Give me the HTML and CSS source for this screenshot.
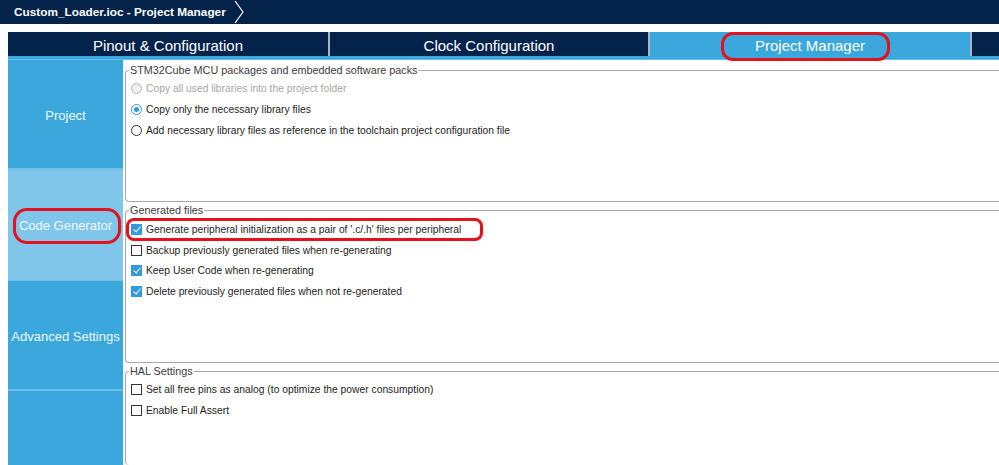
FILE: index.html
```html
<!doctype html>
<html>

<head>
    <meta charset="UTF-8">
    <title>Custom_Loader.ioc - Project Manager</title>
    <link rel="stylesheet" href="styles.css">
</head>

<body>
    <header class="topbar">
        <span class="crumb">Custom_Loader.ioc - Project Manager</span>
        <svg class="chevron" width="12" height="24" viewBox="0 0 12 24">
            <polyline points="2,1 10,12 2,23" fill="none" stroke="#ffffff" stroke-width="1.2"/>
        </svg>
    </header>

    <nav class="tabs">
        <div class="tab">Pinout &amp; Configuration</div>
        <div class="tab">Clock Configuration</div>
        <div class="tab active">Project Manager</div>
        <div class="tab rest"></div>
    </nav>
    <div class="tabline"></div>

    <div class="workspace">
        <aside class="sidebar">
            <div class="side-item">Project</div>
            <div class="side-item selected">Code Generator</div>
            <div class="side-item">Advanced Settings</div>
            <div class="side-fill"></div>
        </aside>

        <main class="panel">
            <fieldset class="group g-packs">
                <legend>STM32Cube MCU packages and embedded software packs</legend>
                <div class="row disabled"><span class="radio"></span>Copy all used libraries into the project folder</div>
                <div class="row"><span class="radio on"></span>Copy only the necessary library files</div>
                <div class="row"><span class="radio"></span>Add necessary library files as reference in the toolchain project configuration file</div>
            </fieldset>

            <fieldset class="group g-files">
                <legend>Generated files</legend>
                <div class="row"><span class="check on"></span>Generate peripheral initialization as a pair of '.c/.h' files per peripheral</div>
                <div class="row"><span class="check"></span>Backup previously generated files when re-generating</div>
                <div class="row"><span class="check on"></span>Keep User Code when re-generating</div>
                <div class="row"><span class="check on"></span>Delete previously generated files when not re-generated</div>
            </fieldset>

            <fieldset class="group g-hal">
                <legend>HAL Settings</legend>
                <div class="row"><span class="check"></span>Set all free pins as analog (to optimize the power consumption)</div>
                <div class="row"><span class="check"></span>Enable Full Assert</div>
            </fieldset>
        </main>
    </div>

    <!-- annotations rouges dessinees par dessus la capture -->
    <div class="mark mark-tab"></div>
    <div class="mark mark-side"></div>
    <div class="mark mark-row"></div>
</body>

</html>
```

FILE: styles.css
```css
* {
    box-sizing: border-box;
}
body {
    margin: 0;
    padding: 0;
    background-color: #ffffff;
    font-family: "Liberation Sans", Arial, sans-serif;
    width: 999px;
    height: 465px;
    overflow: hidden;
    position: relative;
}

/** Barre de titre */
.topbar {
    height: 24px;
    background-color: #03234b;
    display: flex;
    align-items: center;
    padding-left: 14px;
}
.crumb {
    color: #ffffff;
    font-weight: bold;
    font-size: 11.8px;
}
.chevron {
    margin-left: 7px;
    display: block;
}

/** Onglets */
.tabs {
    display: flex;
    gap: 2px;
    margin: 8px 0 0 8px;
    height: 24px;
    background-color: #a9b6c8;
}
.tab {
    width: 320px;
    flex: none;
    background-color: #03234b;
    color: #ffffff;
    font-size: 15px;
    line-height: 21px;
    padding-top: 3px;
    text-align: center;
}
.tab:nth-child(2) {
    width: 318px;
}
.tab.active {
    background-color: #3aa8dc;
}
.tab.rest {
    flex: 1;
    width: auto;
}
.tabline {
    margin-left: 8px;
    height: 4px;
    background-color: #3aa8dc;
    border-bottom: 1px solid #62bce6;
}

/** Zone de travail */
.workspace {
    display: flex;
    height: 405px;
}
.sidebar {
    width: 123px;
    padding-left: 8px;
    display: flex;
    flex-direction: column;
}
.side-item {
    height: 110px;
    padding-top: 3px;
    background-color: #3aa8dc;
    border-bottom: 2px solid #6ec2ea;
    color: #eef7fc;
    font-size: 13px;
    display: flex;
    align-items: center;
    justify-content: center;
}
.side-item.selected {
    background-color: #80c6ea;
    height: 111px;
    padding-top: 1px;
    border-bottom: 1px solid #6ec2ea;
}
.side-fill {
    flex: 1;
    background-color: #3aa8dc;
}

.panel {
    flex: 1;
    padding: 4px 0 0 2px;
    display: flex;
    flex-direction: column;
    gap: 2px;
}
.group {
    margin: 0 -4px 0 0;
    padding: 0 0 0 5px;
    border: 1px solid #a8a8a8;
    border-right: none;
    border-radius: 4px 0 0 4px;
    font-size: 10.3px;
    color: #1e1e1e;
}
.group legend {
    padding: 0 1px;
    margin-left: -2px;
    line-height: 13px;
    font-size: 10.8px;
    color: #3c3c3c;
}
.g-packs {
    height: 138px;
    padding-top: 1px;
}
.g-files {
    height: 159px;
    padding-top: 2px;
}
.g-hal {
    flex: 1;
    padding-top: 1px;
    border-bottom: none;
}
.row {
    height: 21px;
    display: flex;
    align-items: center;
    white-space: nowrap;
}
.g-files .row {
    height: 20.7px;
}
.row.disabled {
    color: #a6a6a6;
}

/** Boutons radio et cases a cocher */
.radio, .check {
    width: 11px;
    height: 11px;
    margin-right: 4px;
    flex: none;
    border: 1px solid #333333;
    background-color: #ffffff;
    position: relative;
}
.radio {
    border-radius: 50%;
}
.disabled .radio {
    border-color: #b8b8b8;
    background-color: #f0f0f0;
}
.radio.on {
    border-color: #3399dd;
}
.radio.on::after {
    content: "";
    position: absolute;
    left: 2px;
    top: 2px;
    width: 5px;
    height: 5px;
    border-radius: 50%;
    background-color: #3399dd;
}
.check.on {
    border-color: #3399dd;
    background-color: #3399dd;
}
.check.on::after {
    content: "";
    position: absolute;
    left: 3px;
    top: 0px;
    width: 3px;
    height: 6px;
    border: solid #ffffff;
    border-width: 0 1.5px 1.5px 0;
    transform: rotate(40deg);
}

/** Annotations rouges */
.mark {
    position: absolute;
    border: 3px solid #e3121c;
    border-radius: 12px;
}
.mark-tab {
    left: 721px;
    top: 32px;
    width: 169px;
    height: 29px;
}
.mark-side {
    left: 13px;
    top: 208px;
    width: 108px;
    height: 36px;
    border-radius: 14px;
}
.mark-row {
    left: 126px;
    top: 218px;
    width: 357px;
    height: 23px;
    border-radius: 8px;
}
```
